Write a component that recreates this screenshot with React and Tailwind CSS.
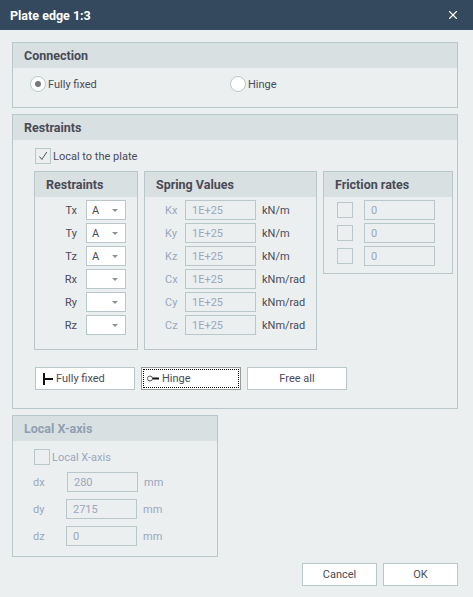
import React from 'react';
import { X } from 'lucide-react';

const Group = ({ title, className = "", disabled = false, children }) => (
    <div className={`border border-[#b8c8ca] ${className}`}>
        <div className={`h-[25px] pl-[11px] bg-[#d8e0e2] flex items-center font-bold text-[12.5px] ${disabled ? "text-[#8f9fb0]" : "text-[#4a4a55]"}`}>
            {title}
        </div>
        {children}
    </div>
);

const Box = ({ value, className = "" }) => (
    <div className={`w-[71px] h-5 border border-[#b8c8ca] pl-[6px] flex items-center text-[#9aa7bd] ${className}`}>
        {value}
    </div>
);

const Select = ({ value }) => (
    <div className="w-10 h-5 bg-white border border-[#b8c8ca] pl-[5px] pr-[7px] flex items-center justify-between text-[#4a4a5a]">
        <span>{value}</span>
        <svg width="6" height="3" viewBox="0 0 6 3"><path d="M0 0h6L3 3z" fill="#8a9497" /></svg>
    </div>
);

const Radio = ({ label, checked, className = "" }) => (
    <div className={`h-4 flex items-center gap-[2px] ${className}`}>
        <div className="w-4 h-4 rounded-full bg-white border border-[#b8c8ca] flex items-center justify-center">
            {checked && <div className="w-[6px] h-[6px] rounded-full bg-[#77787c]"></div>}
        </div>
        <span>{label}</span>
    </div>
);

const Check = ({ checked }) => (
    <div className="w-4 h-4 border border-[#b8c8ca] flex items-center justify-center">
        {checked && (
            <svg width="10" height="10" viewBox="0 0 10 10" fill="none">
                <path d="M1.5 5.5L3.8 8.5L8.8 1" stroke="#555" strokeWidth="1" />
            </svg>
        )}
    </div>
);

const restraints = [["Tx", "A"], ["Ty", "A"], ["Tz", "A"], ["Rx", ""], ["Ry", ""], ["Rz", ""]];
const springs = [["Kx", "kN/m"], ["Ky", "kN/m"], ["Kz", "kN/m"], ["Cx", "kNm/rad"], ["Cy", "kNm/rad"], ["Cz", "kNm/rad"]];
const axes = [["dx", "280", "ml-[1px]"], ["dy", "2715", ""], ["dz", "0", ""]];

export default function App() {
    return (
        <div className="w-[473px] h-[597px] bg-[#ebeff0] flex flex-col text-[11px] leading-[17px] text-[#4a4a5a] overflow-hidden [font-family:Roboto,sans-serif]">
            <div className="h-[30px] shrink-0 bg-[#34495e] text-white font-bold text-[12.5px] pl-[10px] pr-[13px] flex items-center justify-between">
                <span>Plate edge 1:3</span>
                <X size={14} strokeWidth={2} />
            </div>

            <div className="flex-1 flex flex-col px-3 pt-3">
                <Group title="Connection" className="h-[66px] w-[446px]">
                    <div className="flex pl-[17px] pt-2">
                        <Radio label="Fully fixed" checked className="w-[200px]" />
                        <Radio label="Hinge" />
                    </div>
                </Group>

                <Group title="Restraints" className="h-[295px] w-[446px] mt-[6px]">
                    <div className="ml-[22px] mt-2 h-4 flex items-center gap-[2px]">
                        <Check checked />
                        <span>Local to the plate</span>
                    </div>

                    <div className="flex items-start gap-[6px] pl-[21px] pt-[7px]">
                        <Group title="Restraints" className="w-[104px] h-[179px]">
                            <div className="flex flex-col gap-[3px] pt-[3px] pl-[29px]">
                                {restraints.map(([label, value]) => (
                                    <div key={label} className="flex items-center gap-[9px]">
                                        <span className="w-[13px] text-right">{label}</span>
                                        <Select value={value} />
                                    </div>
                                ))}
                            </div>
                        </Group>

                        <Group title="Spring Values" className="w-[173px] h-[179px]">
                            <div className="flex flex-col gap-[3px] pt-[3px] pl-[20px]">
                                {springs.map(([label, unit]) => (
                                    <div key={label} className="flex items-center">
                                        <span className="w-[20px] text-[#9aa7bd]">{label}</span>
                                        <Box value="1E+25" />
                                        <span className="ml-[6px]">{unit}</span>
                                    </div>
                                ))}
                            </div>
                        </Group>

                        <Group title="Friction rates" className="w-[130px] h-[103px]">
                            <div className="flex flex-col gap-[3px] pt-[3px] pl-[13px]">
                                {[0, 1, 2].map((i) => (
                                    <div key={i} className="flex items-center gap-[11px]">
                                        <Check />
                                        <Box value="0" />
                                    </div>
                                ))}
                            </div>
                        </Group>
                    </div>

                    <div className="flex gap-[6px] pl-[22px] pt-[17px]">
                        <button className="w-[100px] h-[23px] bg-white border border-[#b8c8ca] flex items-center pl-[7px] gap-[3px]">
                            <svg width="10" height="12" viewBox="0 0 10 12" className="shrink-0">
                                <path d="M0 0h2v12H0zM2 5h8v2H2z" fill="#111" />
                            </svg>
                            <span>Fully fixed</span>
                        </button>
                        <button className="w-[100px] h-[23px] bg-white border border-[#9a9a9a] p-[1px]">
                            <div className="h-full border border-dotted border-black flex items-center pl-[3px] gap-[3px]">
                                <svg width="12" height="7" viewBox="0 0 12 7" className="shrink-0">
                                    <circle cx="3" cy="3.5" r="2.5" fill="none" stroke="#555" />
                                    <path d="M5.5 2.5h6.5v2h-6.5z" fill="#111" />
                                </svg>
                                <span>Hinge</span>
                            </div>
                        </button>
                        <button className="w-[100px] h-[23px] bg-white border border-[#b8c8ca]">Free all</button>
                    </div>
                </Group>

                <Group title="Local X-axis" disabled className="h-[142px] w-[206px] mt-[6px] text-[#9aa7bd]">
                    <div className="ml-[21px] mt-2 h-4 flex items-center gap-[2px]">
                        <Check />
                        <span>Local X-axis</span>
                    </div>
                    <div className="flex flex-col gap-[7px] pt-[7px] pl-[20px]">
                        {axes.map(([label, value, offset]) => (
                            <div key={label} className="flex items-center">
                                <span className="w-[33px]">{label}</span>
                                <Box value={value} className={offset} />
                                <span className="ml-[6px]">mm</span>
                            </div>
                        ))}
                    </div>
                </Group>

                <div className="flex justify-end gap-[6px] mt-[6px] w-[446px]">
                    <button className="w-[75px] h-[23px] bg-white border border-[#b8c8ca]">Cancel</button>
                    <button className="w-[75px] h-[23px] bg-white border border-[#b8c8ca]">OK</button>
                </div>
            </div>
        </div>
    );
}
